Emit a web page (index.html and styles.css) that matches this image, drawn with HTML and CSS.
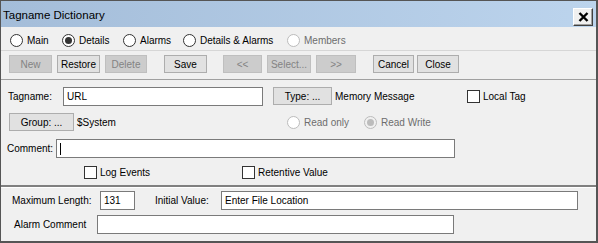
FILE: index.html
```html
<!DOCTYPE html>
<html lang="en">
<head>
    <meta charset="UTF-8">
    <title>Tagname Dictionary</title>
    <link rel="stylesheet" href="styles.css">
</head>
<body>

    <div class="window">
        <div class="titlebar">
            <span class="title">Tagname Dictionary</span>
            <button class="close">
                <svg width="11" height="10" viewBox="0 0 11 10"><path d="M1.5 1 L9.5 9 M9.5 1 L1.5 9" stroke="#000" stroke-width="2.4" fill="none"/></svg>
            </button>
        </div>

        <div class="tabs">
            <label class="opt opt-main"><span class="radio"></span>Main</label>
            <label class="opt opt-details"><span class="radio checked"></span>Details</label>
            <label class="opt opt-alarms"><span class="radio"></span>Alarms</label>
            <label class="opt opt-both"><span class="radio"></span>Details &amp; Alarms</label>
            <label class="opt disabled"><span class="radio"></span>Members</label>
        </div>

        <div class="toolbar">
            <button class="btn w43" disabled>New</button>
            <button class="btn w43 gap5">Restore</button>
            <button class="btn w42 gap5" disabled>Delete</button>
            <button class="btn w43 gap17">Save</button>
            <button class="btn w39 gap16" disabled>&lt;&lt;</button>
            <button class="btn w44 gap5" disabled>Select...</button>
            <button class="btn w40 gap5" disabled>&gt;&gt;</button>
            <button class="btn w41 gap17">Cancel</button>
            <button class="btn w42 gap3">Close</button>
        </div>

        <div class="details">
            <div class="row row-tag">
                <span class="lbl lbl-tag">Tagname:</span>
                <input class="field f-tag" type="text" value="URL">
                <button class="btn btn-type">Type: ...</button>
                <span class="type-name">Memory Message</span>
                <label class="check-opt"><span class="box"></span>Local Tag</label>
            </div>
            <div class="row row-group">
                <button class="btn btn-group">Group: ...</button>
                <span class="group-name">$System</span>
                <label class="opt opt-ro disabled"><span class="radio"></span>Read only</label>
                <label class="opt disabled"><span class="radio checked"></span>Read Write</label>
            </div>
            <div class="row row-comment">
                <span class="lbl lbl-comment">Comment:</span>
                <input class="field f-comment" type="text" value="">
                <span class="caret"></span>
            </div>
            <div class="row row-checks">
                <label class="check-opt chk-log"><span class="box"></span>Log Events</label>
                <label class="check-opt"><span class="box"></span>Retentive Value</label>
            </div>
        </div>

        <div class="extra">
            <div class="row row-len">
                <span class="lbl lbl-max">Maximum Length:</span>
                <input class="field f-max" type="text" value="131">
                <span class="lbl lbl-init">Initial Value:</span>
                <input class="field f-init" type="text" value="Enter File Location">
            </div>
            <div class="row row-alarm">
                <span class="lbl lbl-alarm">Alarm Comment</span>
                <input class="field f-alarm" type="text" value="">
            </div>
        </div>
    </div>

</body>
</html>
```

FILE: styles.css
```css
* {
    box-sizing: border-box;
}
body {
    margin: 0;
    font-family: 'Liberation Sans', Arial, sans-serif;
    font-size: 10px;
    color: #000;
    background: #f0f0f0;
}
.window {
    width: 598px;
    height: 243px;
    border-top: 1px solid #555;
    border-left: 1px solid #555;
    border-right: 2px solid #555;
    border-bottom: 2px solid #555;
    background: #f0f0f0;
    overflow: hidden;
}

/* title bar */
.titlebar {
    height: 26px;
    display: flex;
    align-items: center;
    justify-content: space-between;
    padding-left: 2px;
    padding-right: 3px;
    background: linear-gradient(to right, #a4bdd9, #bcd4ed);
}
.title {
    font-size: 11.5px;
    padding-top: 2px;
}
.close {
    width: 20px;
    height: 18px;
    margin-top: 6px;
    padding: 0;
    display: flex;
    align-items: center;
    justify-content: center;
    background: #f0f0f0;
    border: 1px solid;
    border-color: #fff #404040 #404040 #fff;
    box-shadow: inset -1px -1px 0 #a0a0a0;
}

/* radio options */
.tabs {
    height: 23px;
    padding-top: 3px;
    padding-left: 9px;
    display: flex;
    align-items: center;
}
.opt {
    display: flex;
    align-items: center;
    white-space: nowrap;
}
.opt-main { width: 52px; }
.opt-details { width: 61px; }
.opt-alarms { width: 60px; }
.opt-both { width: 104px; }
.opt.disabled { color: #6d6d6d; }
.radio {
    width: 13px;
    height: 13px;
    margin-right: 4px;
    border: 1px solid #333;
    border-radius: 50%;
    background: #fff;
    display: flex;
    align-items: center;
    justify-content: center;
}
.radio.checked::after {
    content: "";
    width: 7px;
    height: 7px;
    border-radius: 50%;
    background: #333;
}
.disabled .radio {
    border-color: #bcbcbc;
    background: #fff;
}
.disabled .radio.checked {
    background: #f0f0f0;
}
.disabled .radio.checked::after {
    background: #bcbcbc;
}

/* button row */
.toolbar {
    height: 30px;
    padding-top: 4px;
    padding-left: 8px;
    display: flex;
    align-items: flex-start;
    border-top: 1px solid #d6d6d6;
    border-bottom: 1px solid #a0a0a0;
}
.btn {
    height: 18px;
    padding: 0;
    font-family: inherit;
    font-size: 10px;
    color: #000;
    background: #e1e1e1;
    border: 1px solid #adadad;
}
.btn:disabled {
    color: #838383;
    background: #cccccc;
    border-color: #bfbfbf;
}
.w39 { width: 39px; }
.w40 { width: 40px; }
.w41 { width: 41px; }
.w42 { width: 42px; }
.w43 { width: 43px; }
.w44 { width: 44px; }
.gap3 { margin-left: 3px; }
.gap5 { margin-left: 5px; }
.gap16 { margin-left: 16px; }
.gap17 { margin-left: 17px; }

/* rows */
.row {
    display: flex;
    align-items: center;
}
.lbl {
    white-space: nowrap;
}
.field {
    height: 19px;
    padding: 0 3px;
    font-family: inherit;
    font-size: 10px;
    color: #000;
    background: #fff;
    border: 1px solid #7a7a7a;
    outline: none;
}

.details {
    height: 107px;
    padding-top: 7px;
    border-bottom: 2px solid #808080;
}
.row-tag {
    height: 19px;
    padding-left: 7px;
}
.lbl-tag { width: 55px; }
.f-tag { width: 200px; }
.btn-type {
    width: 59px;
    margin-left: 10px;
    margin-top: -1px;
}
.type-name {
    width: 132px;
    margin-left: 3px;
}
.check-opt {
    display: flex;
    align-items: center;
    white-space: nowrap;
}
.box {
    width: 13px;
    height: 13px;
    margin-right: 3px;
    border: 1px solid #333;
    background: #fff;
}

.row-group {
    margin-top: 7px;
    height: 18px;
    padding-left: 8px;
}
.btn-group { width: 65px; }
.group-name {
    width: 210px;
    margin-left: 3px;
}
.opt-ro { width: 77px; }

.row-comment {
    margin-top: 8px;
    height: 19px;
    padding-left: 6px;
    position: relative;
}
.lbl-comment { width: 49px; }
.f-comment { width: 399px; }
.caret {
    position: absolute;
    left: 59px;
    top: 4px;
    width: 1px;
    height: 12px;
    background: #000;
}

.row-checks {
    margin-top: 8px;
    height: 13px;
    padding-left: 83px;
}
.chk-log { width: 158px; }

.extra {
    border-top: 1px solid #fff;
    padding-top: 3px;
}
.row-len {
    height: 19px;
    padding-left: 11px;
}
.lbl-max { width: 88px; }
.f-max { width: 35px; }
.lbl-init {
    width: 66px;
    margin-left: 20px;
}
.f-init { width: 357px; }
.row-alarm {
    margin-top: 5px;
    height: 19px;
    padding-left: 13px;
}
.lbl-alarm { width: 83px; }
.f-alarm { width: 357px; }
```
